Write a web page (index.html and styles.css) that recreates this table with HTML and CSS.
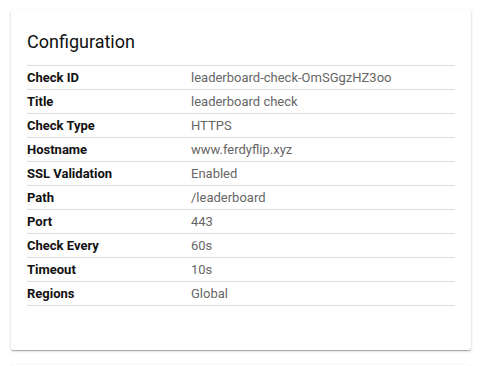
FILE: index.html
```html
<!DOCTYPE html>
<html>
<head>
<meta charset="utf-8">
<link rel="stylesheet" href="styles.css">
</head>
<body>
<div class="page">
  <section class="card">
    <h2 class="card-title">Configuration</h2>
    <table class="cfg">
      <tr><th>Check ID</th><td>leaderboard-check-OmSGgzHZ3oo</td></tr>
      <tr><th>Title</th><td>leaderboard check</td></tr>
      <tr><th>Check Type</th><td>HTTPS</td></tr>
      <tr><th>Hostname</th><td>www.ferdyflip.xyz</td></tr>
      <tr><th>SSL Validation</th><td>Enabled</td></tr>
      <tr><th>Path</th><td>/leaderboard</td></tr>
      <tr><th>Port</th><td>443</td></tr>
      <tr><th>Check Every</th><td>60s</td></tr>
      <tr><th>Timeout</th><td>10s</td></tr>
      <tr><th>Regions</th><td>Global</td></tr>
    </table>
  </section>
  <section class="card card-next"></section>
</div>
</body>
</html>
```
FILE: styles.css
```css
html, body {
  margin: 0;
  padding: 0;
  background: #fff;
  font-family: Roboto, "Liberation Sans", sans-serif;
}
.page {
  padding: 10px 15px 0 11px;
  display: flex;
  flex-direction: column;
  gap: 15px;
}
.card {
  background: #fff;
  border-radius: 2px;
  box-shadow: 0 1px 3px rgba(0,0,0,0.2), 0 1px 1px rgba(0,0,0,0.14), 0 2px 1px -1px rgba(0,0,0,0.12);
  padding: 16px 16px 44px 16px;
}
.card-next {
  height: 40px;
  padding: 0;
}
.card-title {
  margin: 0;
  font-size: 18px;
  font-weight: 400;
  color: #111;
  line-height: 24px;
  padding: 4px 0 11px;
}
.cfg {
  width: 100%;
  border-collapse: collapse;
  font-size: 13px;
}
.cfg tr {
  border-top: 1px solid #ddd;
  border-bottom: 1px solid #ddd;
}
.cfg th, .cfg td {
  height: 23px;
  padding: 0;
  text-align: left;
  vertical-align: middle;
}
.cfg th {
  width: 164px;
  font-weight: 700;
  color: #111;
}
.cfg td {
  color: #666;
}
```
